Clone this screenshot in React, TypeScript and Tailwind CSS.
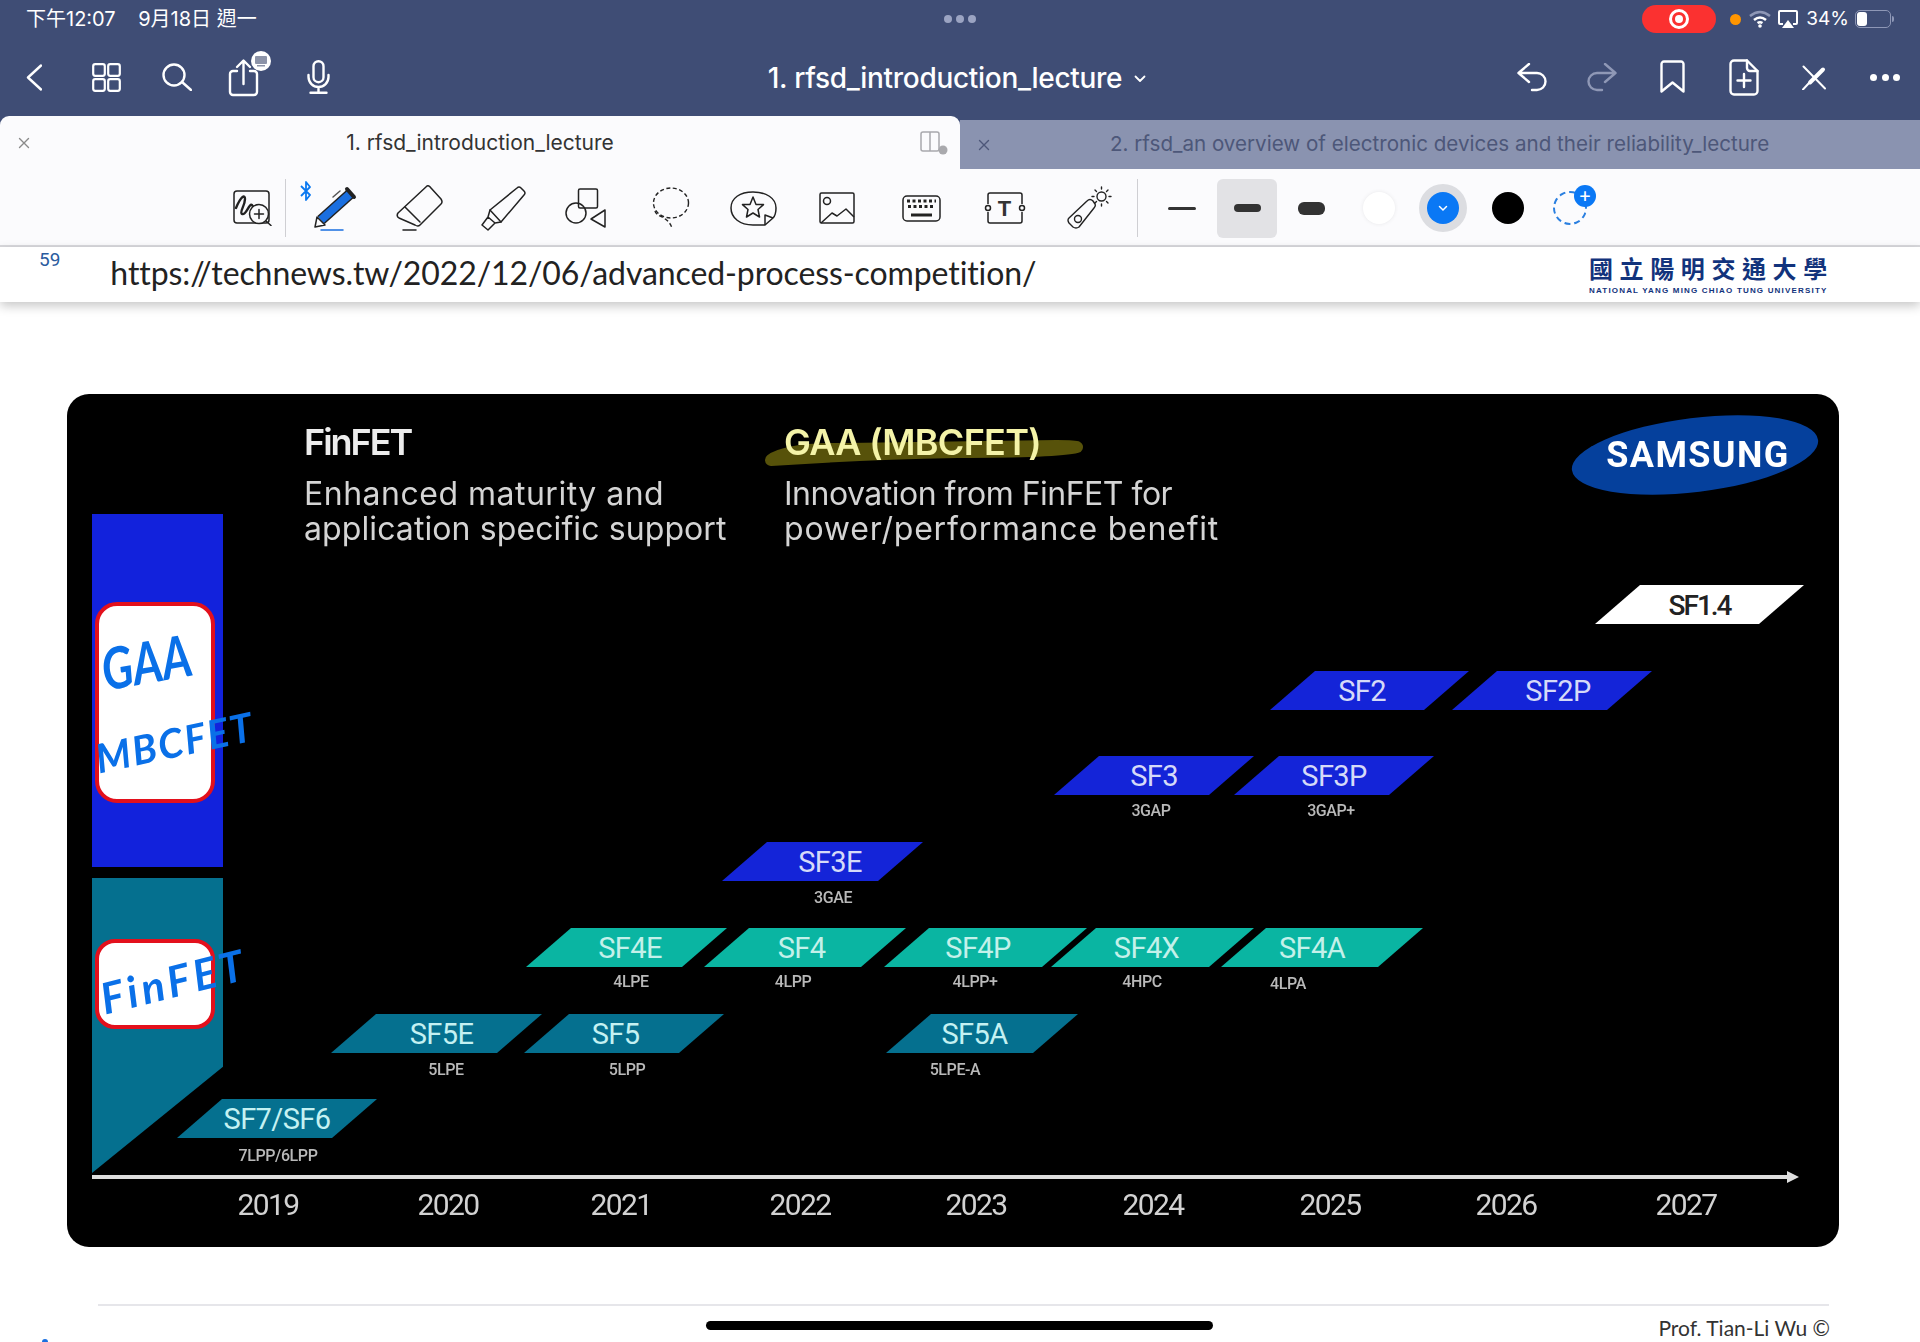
const nodes: { name: string; cls: string; text?: string }[] = [
  { name: 'SF7/SF6', cls: 'left-[110px] top-[705px] w-[200px] bg-[#05708f] text-[#c4f1f2]' },
  { name: 'SF5E', cls: 'left-[264px] top-[620px] w-[211px] bg-[#05708f] text-[#c4f1f2] pl-[10px]' },
  { name: 'SF5', cls: 'left-[457px] top-[620px] w-[200px] bg-[#05708f] text-[#c4f1f2] pr-[17px]' },
  { name: 'SF5A', cls: 'left-[819px] top-[620px] w-[192px] bg-[#05708f] text-[#c4f1f2] pr-[15px]' },
  { name: 'SF4E', cls: 'left-[459px] top-[534px] w-[201px] bg-[#0ab5a2] text-[#c4f1ea] pl-[7px]' },
  { name: 'SF4', cls: 'left-[637px] top-[534px] w-[202px] bg-[#0ab5a2] text-[#c4f1ea] pr-[7px]' },
  { name: 'SF4P', cls: 'left-[817px] top-[534px] w-[203px] bg-[#0ab5a2] text-[#c4f1ea] pr-[15px]' },
  { name: 'SF4X', cls: 'left-[984px] top-[534px] w-[203px] bg-[#0ab5a2] text-[#c4f1ea] pr-[12px]' },
  { name: 'SF4A', cls: 'left-[1154px] top-[534px] w-[202px] bg-[#0ab5a2] text-[#c4f1ea] pr-[20px]' },
  { name: 'SF3E', cls: 'left-[655px] top-[448px] w-[201px] bg-[#1424d8] text-[#d5daf8] pl-[15px]' },
  { name: 'SF3', cls: 'left-[987px] top-[362px] w-[200px] bg-[#1424d8] text-[#d5daf8]' },
  { name: 'SF3P', cls: 'left-[1167px] top-[362px] w-[200px] bg-[#1424d8] text-[#d5daf8]' },
  { name: 'SF2', cls: 'left-[1203px] top-[277px] w-[199px] bg-[#1424d8] text-[#d5daf8] pr-[15px]' },
  { name: 'SF2P', cls: 'left-[1385px] top-[277px] w-[200px] bg-[#1424d8] text-[#d5daf8] pl-[12px]' },
  { name: 'SF1.4', cls: 'left-[1528px] top-[191px] w-[209px] bg-white text-[#222] font-medium', text: 'text-[28px] tracking-[-2px]' },
]

const labels = [
  { name: '7LPP/6LPP', cls: 'left-[211px] top-[752px]' },
  { name: '5LPE', cls: 'left-[379px] top-[666px]' },
  { name: '5LPP', cls: 'left-[560px] top-[666px]' },
  { name: '5LPE-A', cls: 'left-[888px] top-[666px]' },
  { name: '4LPE', cls: 'left-[564px] top-[578px]' },
  { name: '4LPP', cls: 'left-[726px] top-[578px]' },
  { name: '4LPP+', cls: 'left-[908px] top-[578px]' },
  { name: '4HPC', cls: 'left-[1075px] top-[578px]' },
  { name: '4LPA', cls: 'left-[1221px] top-[580px]' },
  { name: '3GAE', cls: 'left-[766px] top-[494px]' },
  { name: '3GAP', cls: 'left-[1084px] top-[407px]' },
  { name: '3GAP+', cls: 'left-[1264px] top-[407px]' },
]

const years = [
  { name: '2019', cls: 'left-[201px]' },
  { name: '2020', cls: 'left-[381px]' },
  { name: '2021', cls: 'left-[554px]' },
  { name: '2022', cls: 'left-[733px]' },
  { name: '2023', cls: 'left-[909px]' },
  { name: '2024', cls: 'left-[1086px]' },
  { name: '2025', cls: 'left-[1263px]' },
  { name: '2026', cls: 'left-[1439px]' },
  { name: '2027', cls: 'left-[1619px]' },
]

function Slide() {
  return (
    <div className="relative ml-[67px] mt-[92px] h-[853px] w-[1772px] overflow-hidden rounded-[22px] bg-black font-['Roboto',sans-serif]">
      <div className="absolute inset-0 blur-[0.6px]">
        {/* technology bars */}
        <div className="absolute left-[25px] top-[120px] h-[353px] w-[131px] bg-[#1222dc]" />
        <div className="absolute left-[25px] top-[484px] h-[295px] w-[131px] bg-[#05708f] [clip-path:polygon(0_0,100%_0,100%_64%,0_100%)]" />

        {/* highlighter stroke under the title */}
        <svg className="absolute left-[690px] top-[40px]" width="330" height="40" viewBox="0 0 330 40">
          <path d="M14 26 Q30 14 90 15 L300 12 Q318 12 320 13 Q300 18 200 18 Q100 20 14 26Z" fill="#57520a" stroke="#57520a" strokeWidth="12" strokeLinejoin="round" />
        </svg>

        <div className="absolute left-[237px] top-[26px] font-['Inter',sans-serif] text-[#ececec]">
          <div className="h-[44px] text-[36px] font-semibold leading-[44px] tracking-[-2px]">FinFET</div>
          <div className="mt-[12px] text-[32px] leading-[35px] text-[#d4d4d4]">
            <div className="tracking-[0.5px]">Enhanced maturity and</div>
            <div className="tracking-[0.1px]">application specific support</div>
          </div>
        </div>
        <div className="absolute left-[717px] top-[26px] font-['Inter',sans-serif]">
          <div className="h-[44px] text-[36px] font-semibold leading-[44px] tracking-[-0.7px] text-[#f4f3a8]">GAA (MBCFET)</div>
          <div className="mt-[12px] text-[32px] leading-[35px] text-[#d4d4d4]">
            <div className="tracking-[-0.5px]">Innovation from FinFET for</div>
            <div className="tracking-[0.8px]">power/performance benefit</div>
          </div>
        </div>

        {/* samsung logo */}
        <div className="absolute left-[1500px] top-[16px] flex h-[90px] w-[256px] items-center justify-center">
          <div className="absolute left-[4px] top-[8px] h-[74px] w-[248px] -rotate-[7deg] rounded-[50%] bg-[#05409c]" />
          <span className="relative pl-[6px] font-['Roboto',sans-serif] text-[36px] font-bold leading-none tracking-[1.4px] text-white">SAMSUNG</span>
        </div>

        {nodes.map((n) => (
          <div
            key={n.name}
            className={`absolute flex h-[39px] items-center justify-center pt-[2px] [clip-path:polygon(45px_0,100%_0,calc(100%-45px)_100%,0_100%)] ${n.text ?? 'text-[29px] tracking-[-0.6px]'} ${n.cls}`}
          >
            {n.name}
          </div>
        ))}

        {labels.map((l) => (
          <div key={l.name} className={`absolute h-5 -translate-x-1/2 text-[16px] font-medium leading-5 tracking-[-0.4px] text-[#b9b9b9] ${l.cls}`}>
            {l.name}
          </div>
        ))}

        {/* time axis */}
        <div className="absolute left-[25px] top-[781px] h-[4px] w-[1695px] bg-[#dedede]" />
        <div className="absolute left-[1720px] top-[777px] h-0 w-0 border-y-[6px] border-l-[12px] border-y-transparent border-l-[#dedede]" />

        {years.map((y) => (
          <div key={y.name} className={`absolute top-[793px] h-9 -translate-x-1/2 text-[30px] leading-9 tracking-[-1.6px] text-[#d2d2d2] ${y.cls}`}>
            {y.name}
          </div>
        ))}
      </div>

      {/* boxes and ink written over the slide */}
      <div className="absolute left-[28px] top-[208px] h-[201px] w-[120px] rounded-[22px] border-[4px] border-[#e3101c] bg-white" />
      <div className="absolute left-[28px] top-[545px] h-[90px] w-[120px] rounded-[20px] border-[4px] border-[#e3101c] bg-white" />
      <div className="absolute left-[34px] top-[243px] -rotate-[10deg] scale-y-125 font-['Lato',sans-serif] text-[46px] font-bold italic leading-[50px] text-[#0a70e8]">GAA</div>
      <div className="absolute left-[27px] top-[328px] -rotate-[12deg] font-['Lato',sans-serif] text-[40px] font-bold italic leading-[40px] tracking-[2px] text-[#0a70e8]">MBCFET</div>
      <div className="absolute left-[32px] top-[562px] -rotate-[14deg] font-['Lato',sans-serif] text-[43px] font-bold italic leading-[50px] tracking-[4px] text-[#0a70e8]">FinFET</div>
    </div>
  )
}

function StatusBar() {
  return (
    <div className="grid h-[38px] grid-cols-3 items-center text-white">
      <div className="pl-[26px] font-['Inter','Noto_Sans_CJK_TC',sans-serif] text-[20px] whitespace-pre">下午12:07    9月18日 週一</div>
      <div className="flex justify-center gap-[4px]">
        <span className="h-[8px] w-[8px] rounded-full bg-[#9ba4c2]" />
        <span className="h-[8px] w-[8px] rounded-full bg-[#9ba4c2]" />
        <span className="h-[8px] w-[8px] rounded-full bg-[#9ba4c2]" />
      </div>
      <div className="flex items-center justify-end pr-[26px]">
        <div className="flex h-[28px] w-[74px] items-center justify-center rounded-[14px] bg-[#fb3130]">
          <span className="flex h-[20px] w-[20px] items-center justify-center rounded-full border-[3px] border-white">
            <span className="h-[8px] w-[8px] rounded-full bg-white" />
          </span>
        </div>
        <span className="ml-[14px] h-[11px] w-[11px] rounded-full bg-[#ff9500]" />
        <svg className="ml-[8px]" width="22" height="18" viewBox="0 0 22 18" fill="none" stroke="white">
          <path d="M1 6 Q11 -2 21 6" strokeWidth="2.5" stroke="#8e97b6" />
          <path d="M5 10 Q11 5 17 10" strokeWidth="2.5" />
          <path d="M8.5 13 Q11 11.500 13.500 13" strokeWidth="2.5" />
          <circle cx="11" cy="16" r="1.8" fill="white" stroke="none" />
        </svg>
        <svg className="ml-[7px]" width="20" height="19" viewBox="0 0 20 19" fill="none">
          <path d="M5 14 H2 a1 1 0 0 1 -1 -1 V2 a1 1 0 0 1 1 -1 H18 a1 1 0 0 1 1 1 V13 a1 1 0 0 1 -1 1 H15" stroke="white" strokeWidth="2" />
          <path d="M10 10 L16 18 H4Z" fill="white" />
        </svg>
        <span className="ml-[8px] font-['Inter',sans-serif] text-[19px]">34%</span>
        <div className="ml-[6px] flex h-[18px] w-[36px] items-center rounded-[5px] border border-[#8e97b6] p-[1px]">
          <span className="h-full w-[10px] rounded-[3px] bg-white" />
        </div>
        <span className="ml-[1px] h-[6px] w-[2px] rounded-r bg-[#8e97b6]" />
      </div>
    </div>
  )
}

function NavBar() {
  return (
    <div className="grid h-[78px] grid-cols-3 items-center text-white">
      <div className="flex items-center pl-[26px]">
        <svg width="16" height="27" viewBox="0 0 16 27" fill="none" stroke="white" strokeWidth="2.4" strokeLinecap="round" strokeLinejoin="round">
          <polyline points="15,1.500 2,13.500 15,25.500" />
        </svg>
        <svg className="ml-[50px]" width="29" height="29" viewBox="0 0 29 29" fill="none" stroke="white" strokeWidth="2.2">
          <rect x="1.200" y="1.200" width="11.600" height="11.600" rx="2" />
          <rect x="16.200" y="1.200" width="11.600" height="11.600" rx="2" />
          <rect x="1.200" y="16.200" width="11.600" height="11.600" rx="2" />
          <rect x="16.200" y="16.200" width="11.600" height="11.600" rx="2" />
        </svg>
        <svg className="ml-[41px]" width="30" height="28" viewBox="0 0 30 28" fill="none" stroke="white" strokeWidth="2.4" strokeLinecap="round">
          <circle cx="12" cy="12" r="10.500" />
          <line x1="20" y1="19" x2="29" y2="27" />
        </svg>
        <svg className="ml-[36px] -mt-[6px]" width="44" height="48" viewBox="0 -6 44 48" fill="none" stroke="white" strokeWidth="2.400" strokeLinecap="round" strokeLinejoin="round">
          <path d="M9 15 H5 a3 3 0 0 0 -3 3 V36 a3 3 0 0 0 3 3 H26 a3 3 0 0 0 3 -3 V18 a3 3 0 0 0 -3 -3 H22" />
          <path d="M15.500 28 V5 M9 11 L15.500 4.500 L22 11" />
          <circle cx="33" cy="5" r="10" fill="white" stroke="none" />
          <rect x="27" y="0" width="12" height="8" rx="1" fill="#8c93a8" stroke="none" />
          <rect x="29" y="9" width="8" height="1.500" fill="#8c93a8" stroke="none" />
        </svg>
        <svg className="ml-[35px]" width="23" height="34" viewBox="0 0 23 34" fill="none" stroke="white" strokeWidth="2.400" strokeLinecap="round">
          <rect x="6.500" y="1.200" width="10" height="21" rx="5" />
          <path d="M1.500 15 V17 a10 10 0 0 0 20 0 V15 M11.500 27 V32.500 M3.500 32.800 H19.500" />
        </svg>
      </div>
      <div className="flex items-center justify-center pr-[6px] pt-[1px] font-['Inter',sans-serif] text-[28px] font-medium tracking-[-0.3px]">
        <span>1. rfsd_introduction_lecture</span>
        <svg className="ml-[12px] mt-[2px]" width="12" height="8" viewBox="0 0 12 8" fill="none" stroke="white" strokeWidth="1.800" strokeLinecap="round" strokeLinejoin="round">
          <polyline points="1.500,1.500 6,6 10.500,1.500" />
        </svg>
      </div>
      <div className="flex items-center justify-end pr-[20px]">
        <svg width="30" height="29" viewBox="0 0 30 29" fill="none" stroke="white" strokeWidth="2.400" strokeLinecap="round" strokeLinejoin="round">
          <path d="M12 1 L1.500 10 L12 19 M1.500 10 H20 a8.500 8.500 0 0 1 0 17 H15" />
        </svg>
        <svg className="ml-[40px]" width="30" height="29" viewBox="0 0 30 29" fill="none" stroke="#8f98b6" strokeWidth="2.400" strokeLinecap="round" strokeLinejoin="round">
          <path d="M18 1 L28.500 10 L18 19 M28.500 10 H10 a8.500 8.500 0 0 0 0 17 H15" />
        </svg>
        <svg className="ml-[43px]" width="25" height="34" viewBox="0 0 25 34" fill="none" stroke="white" strokeWidth="2.400" strokeLinecap="round" strokeLinejoin="round">
          <path d="M1.500 31.500 V4 a2.500 2.500 0 0 1 2.500 -2.500 H21 a2.500 2.500 0 0 1 2.500 2.500 V31.500 L12.500 22.500Z" />
        </svg>
        <svg className="ml-[44px]" width="30" height="37" viewBox="0 0 30 37" fill="none" stroke="white" strokeWidth="2.400" strokeLinecap="round" strokeLinejoin="round">
          <path d="M18 1.500 H5 a3.500 3.500 0 0 0 -3.500 3.500 V32 a3.500 3.500 0 0 0 3.500 3.500 H25 a3.500 3.500 0 0 0 3.500 -3.500 V12Z" />
          <path d="M18 1.500 V9 a3 3 0 0 0 3 3 H28.500" />
          <path d="M15 15 V28 M8.500 21.500 H21.500" />
        </svg>
        <svg className="ml-[43px]" width="24" height="25" viewBox="0 0 24 25" fill="none" stroke="white" strokeLinecap="round">
          <line x1="1.500" y1="1.500" x2="23" y2="23.500" strokeWidth="2" />
          <path d="M21 4.500 L8 17.500" strokeWidth="4" />
          <path d="M7 18 L1 24.500" strokeWidth="2" />
        </svg>
        <div className="ml-[44px] flex w-[30px] justify-between">
          <span className="h-[7px] w-[7px] rounded-full bg-white" />
          <span className="h-[7px] w-[7px] rounded-full bg-white" />
          <span className="h-[7px] w-[7px] rounded-full bg-white" />
        </div>
      </div>
    </div>
  )
}

function CloseMark({ color }: { color: string }) {
  return (
    <svg width="12" height="12" viewBox="0 0 12 12" fill="none" stroke={color} strokeWidth="1.400" strokeLinecap="round">
      <path d="M1.500 1.500 L10.500 10.500 M10.500 1.500 L1.500 10.500" />
    </svg>
  )
}

function Tabs() {
  return (
    <div className="flex h-[53px] items-end font-['Inter',sans-serif]">
      <div className="relative flex h-[53px] w-[960px] items-center justify-center rounded-t-[9px] bg-[#fbfbfd] text-[21px] text-[#333]">
        <span className="absolute left-[18px]"><CloseMark color="#8a8a8a" /></span>
        <span>1. rfsd_introduction_lecture</span>
        <svg className="absolute left-[920px] top-[15px]" width="30" height="24" viewBox="0 0 30 24" fill="none" stroke="#a9a9ad" strokeWidth="1.500">
          <rect x="1" y="1" width="18" height="19" rx="2" />
          <line x1="10" y1="1" x2="10" y2="20" />
          <circle cx="23" cy="19" r="4.500" fill="#a9a9ad" stroke="none" />
        </svg>
      </div>
      <div className="relative flex h-[49px] w-[960px] items-center bg-[#8a93b0] text-[20.600px] text-[#4d5779]">
        <span className="absolute left-[18px]"><CloseMark color="#4d5779" /></span>
        <span className="ml-[150px]">2. rfsd_an overview of electronic devices and their reliability_lecture</span>
      </div>
    </div>
  )
}

function Toolbar() {
  return (
    <div className="flex h-[78px] items-center border-b-2 border-[#d9d9dd] bg-[#fbfbfd] pl-[233px] pt-[2px]">
      {/* zoom window */}
      <svg width="39" height="36" viewBox="0 0 39 36" fill="none" stroke="#222" strokeWidth="1.500" strokeLinecap="round">
        <rect x="1" y="1" width="35" height="32" rx="3" />
        <path d="M3 18 C8 6 12 4 12 9 C12 16 6 22 9 24 C13 26 16 13 19 15 C22 17 18 23 22 22" strokeWidth="2.400" />
        <circle cx="26" cy="24" r="9.500" fill="#fbfbfd" />
        <path d="M26 19.500 V28.500 M21.500 24 H30.500 M33 31 L38 35.500" />
      </svg>
      <span className="ml-[13px] h-[58px] w-px bg-[#cfcfd3]" />
      {/* pen */}
      <svg className="ml-[14px] mb-[34px]" width="12" height="20" viewBox="0 0 12 20" fill="none" stroke="#0a78f0" strokeWidth="1.800" strokeLinejoin="round">
        <path d="M1 5 L10 14 L6 19 V1 L10 6 L1 15" />
      </svg>
      <svg className="ml-[2px]" width="43" height="45" viewBox="0 0 43 45" fill="none" strokeLinecap="round">
        <path d="M7 34 L36 8" stroke="#222" strokeWidth="11" strokeLinecap="butt" />
        <path d="M7 34 L36 8" stroke="#1a6fe0" strokeWidth="8" strokeLinecap="butt" />
        <path d="M33 3 L40 11" stroke="#222" strokeWidth="4" />
        <path d="M26 5 L19 11" stroke="#555" strokeWidth="1.500" />
        <path d="M1 41 L3 31 L11 39Z" fill="#fbfbfd" stroke="#222" strokeWidth="1.500" strokeLinejoin="round" />
        <path d="M7 44 H29" stroke="#1a6fe0" strokeWidth="1.500" />
      </svg>
      {/* eraser */}
      <svg className="ml-[39px]" width="47" height="46" viewBox="0 0 47 46" fill="none" stroke="#222" strokeWidth="1.500" strokeLinejoin="round" strokeLinecap="round">
        <path d="M31 1 Q33 0 35 3 L45 14 Q47 17 45 19 L24 40 Q22 42 19 40 L3 33 Q0 31 2 28Z" />
        <path d="M9 22 L24 37 M7 45 H20" />
      </svg>
      {/* highlighter */}
      <svg className="ml-[38px]" width="45" height="45" viewBox="0 0 45 45" fill="none" stroke="#222" strokeWidth="1.500" strokeLinejoin="round" strokeLinecap="round">
        <path d="M36 2 Q38 0 40 2 L43 5 Q45 7 43 9 L20 36 L9 24Z" />
        <path d="M9 24 L7 31 L14 37 L20 36 M7 31 L1 39 L7 44 L14 37" />
      </svg>
      {/* shapes */}
      <svg className="ml-[39px]" width="43" height="41" viewBox="0 0 43 41" fill="none" stroke="#222" strokeWidth="1.500" strokeLinejoin="round">
        <rect x="13.500" y="1" width="19" height="19" rx="1.500" />
        <circle cx="11" cy="25" r="10" />
        <path d="M40 22 V39 L26 31Z" />
      </svg>
      {/* lasso */}
      <svg className="ml-[44px]" width="38" height="42" viewBox="0 0 38 42" fill="none" stroke="#222" strokeWidth="1.400" strokeDasharray="4 2.500">
        <ellipse cx="19" cy="16" rx="17.500" ry="15" />
        <path d="M3 24 C4 30 16 29 20 41" />
      </svg>
      {/* sticker */}
      <svg className="ml-[40px]" width="47" height="35" viewBox="0 0 47 35" fill="none" stroke="#222" strokeWidth="1.500" strokeLinejoin="round">
        <path d="M23 1 C36 1 46 7 46 17 C46 21 45 25 43 27 L35 34 H23 C10 34 1 27 1 17 C1 7 10 1 23 1Z" />
        <path d="M43 27 L35 24 L35 34" />
        <path d="M23 6 L26 13.500 L33.500 13.600 L28 18.500 L29.500 26 L23 22 L16.500 26 L18 18.500 L12.500 13.600 L20 13.500Z" />
      </svg>
      {/* image */}
      <svg className="ml-[42px]" width="36" height="32" viewBox="0 0 36 32" fill="none" stroke="#222" strokeWidth="1.500" strokeLinejoin="round">
        <rect x="1" y="1" width="34" height="30" rx="1.500" />
        <circle cx="8" cy="9" r="3.500" />
        <path d="M2 31 L13 21 L18 24 L27 17 L35 25" />
      </svg>
      {/* keyboard */}
      <svg className="ml-[47px]" width="39" height="27" viewBox="0 0 39 27" fill="none" stroke="#222" strokeWidth="1.500">
        <rect x="1" y="1" width="37" height="25" rx="4" />
        <path d="M5 6 H34 M6 11.500 H33" strokeWidth="3" strokeDasharray="3 2.500" />
        <path d="M9 20 H30" strokeWidth="3" />
      </svg>
      {/* text box */}
      <svg className="ml-[43px]" width="42" height="32" viewBox="0 0 42 32" fill="none" stroke="#222" strokeWidth="1.500">
        <path d="M4 12 V3 a2 2 0 0 1 2 -2 H36 a2 2 0 0 1 2 2 V12 M38 20 V29 a2 2 0 0 1 -2 2 H6 a2 2 0 0 1 -2 -2 V20" />
        <circle cx="4" cy="16" r="2.500" />
        <circle cx="38" cy="16" r="2.500" />
        <text x="20.500" y="24" textAnchor="middle" fontSize="22" fontWeight="700" fontFamily="Liberation Sans" fill="#333" stroke="none">T</text>
      </svg>
      {/* laser pointer */}
      <svg className="ml-[41px]" width="45" height="44" viewBox="0 0 45 44" fill="none" stroke="#222" strokeWidth="1.400" strokeLinecap="round" strokeLinejoin="round">
        <path d="M20 15 Q23 12 26 15 L28 18 Q29 20 27 22 L12 41 Q9 43 6 41 L2 37 Q0 34 2 32Z" />
        <circle cx="11" cy="33" r="3.500" />
        <circle cx="34.500" cy="10.500" r="4.500" />
        <path d="M34.500 1 V3 M34.500 18 V20 M25 10.500 H27 M42 10.500 H44 M28 4 L29.500 5.500 M39.500 15.500 L41 17 M41 4 L39.500 5.500 M29.500 15.500 L28 17" />
      </svg>
      <span className="ml-[25px] h-[58px] w-px bg-[#cfcfd3]" />
      {/* stroke widths */}
      <span className="ml-[30px] h-[3px] w-[28px] rounded-full bg-[#333]" />
      <div className="ml-[21px] flex h-[59px] w-[60px] items-center justify-center rounded-[6px] bg-[#e2e2e5]">
        <span className="h-[8px] w-[27px] rounded-full bg-[#333]" />
      </div>
      <span className="ml-[21px] h-[13px] w-[27px] rounded-[6px] bg-[#333]" />
      {/* colours */}
      <span className="ml-[38px] h-[32px] w-[32px] rounded-full bg-white shadow-[0_0_4px_rgba(0,0,0,0.08)]" />
      <div className="ml-[24px] flex h-[48px] w-[48px] items-center justify-center rounded-full bg-[#dcdde1]">
        <div className="flex h-[32px] w-[32px] items-center justify-center rounded-full bg-[#0a78f5]">
          <svg width="10" height="7" viewBox="0 0 10 7" fill="none" stroke="white" strokeWidth="1.500" strokeLinecap="round">
            <polyline points="1.500,1.500 5,5 8.500,1.500" />
          </svg>
        </div>
      </div>
      <span className="ml-[25px] h-[32px] w-[32px] rounded-full bg-black" />
      <div className="relative ml-[29px] h-[34px] w-[34px] rounded-full border-2 border-dashed border-[#2a7fe0]">
        <span className="absolute left-[19px] top-[-8px] flex h-[22px] w-[22px] items-center justify-center rounded-full bg-[#0a78f5] text-[20px] font-medium leading-none text-white">+</span>
      </div>
    </div>
  )
}

function PageHeader() {
  return (
    <div className="relative z-10 flex h-[55px] bg-white shadow-[0_4px_10px_rgba(0,0,0,0.22)]">
      <span className="ml-[39px] mt-[1px] font-['Roboto',sans-serif] text-[19px] leading-6 text-[#2a5b9e]">59</span>
      <span className="ml-[50px] mt-[5px] font-['Lato',sans-serif] text-[32px] leading-[42px] tracking-[-0.1px] text-[#222]">https://technews.tw/2022/12/06/advanced-process-competition/</span>
      <div className="ml-auto mr-[92px] mt-[7px] flex w-[239px] flex-col font-bold text-[#12337c]">
        <span className="whitespace-nowrap font-['Noto_Sans_CJK_TC',sans-serif] text-[24px] leading-[28px] tracking-[6.600px]">國立陽明交通大學</span>
        <span className="mt-[4px] whitespace-nowrap font-['Liberation_Sans',sans-serif] text-[8px] leading-[10px] tracking-[1.180px]">NATIONAL YANG MING CHIAO TUNG UNIVERSITY</span>
      </div>
    </div>
  )
}

export default function App() {
  return (
    <div className="relative h-[1342px] w-[1920px] overflow-hidden bg-white">
      <div className="bg-[#3f4d75]">
        <StatusBar />
        <NavBar />
        <Tabs />
      </div>
      <Toolbar />
      <PageHeader />
      <Slide />
      <div className="ml-[98px] mt-[57px] h-[2px] w-[1731px] bg-[#e6e6ea]" />
      <div className="mt-[10px] pr-[90px] text-right font-['Lato',sans-serif] text-[21px] leading-6 text-[#333]">Prof. Tian-Li Wu ©</div>
      {/* home indicator */}
      <div className="absolute left-[706px] top-[1321px] h-[9px] w-[507px] rounded-full bg-black" />
      {/* edge of an ink stroke at the bottom of the page */}
      <div className="absolute left-[42px] top-[1339px] h-[3px] w-[6px] rounded-t bg-[#1a6fe0]" />
    </div>
  )
}
